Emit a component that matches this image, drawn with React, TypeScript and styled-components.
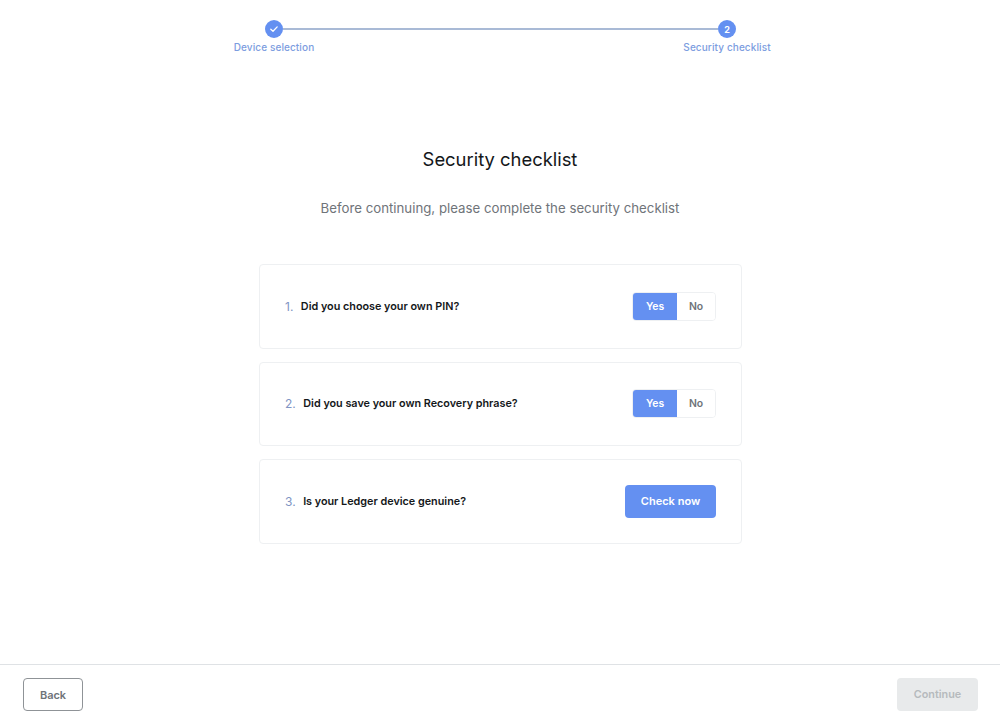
import React from 'react'
import styled, { createGlobalStyle } from 'styled-components'

const Global = createGlobalStyle`
  html, body { margin: 0; padding: 0; background: #fff; }
  body { font-family: Inter, "Noto Sans", sans-serif; color: #14171a; }
  * { box-sizing: border-box; }
`

const questions = [
  { id: 1, text: 'Did you choose your own PIN?', action: 'toggle' },
  { id: 2, text: 'Did you save your own Recovery phrase?', action: 'toggle' },
  { id: 3, text: 'Is your Ledger device genuine?', action: 'check' },
]

const App = () => {
  return (
    <Page>
      <Global />
      <Stepper>
        <Step>
          <Dot>
            <svg width="10" height="10" viewBox="0 0 10 10" fill="none">
              <path d="M1.8 5.2 4 7.3 8.2 2.9" stroke="#fff" strokeWidth="1.3" strokeLinecap="round" strokeLinejoin="round" />
            </svg>
          </Dot>
          <StepLabel>Device selection</StepLabel>
        </Step>
        <Connector />
        <Step>
          <Dot>2</Dot>
          <StepLabel>Security checklist</StepLabel>
        </Step>
      </Stepper>
      <Main>
        <Title>Security checklist</Title>
        <Subtitle>Before continuing, please complete the security checklist</Subtitle>
        <List>
          {questions.map((q) => (
            <Card key={q.id}>
              <Question>
                <Num>{q.id}.</Num>
                <QuestionText>{q.text}</QuestionText>
              </Question>
              {q.action === 'toggle' ? (
                <Toggle>
                  <YesButton>Yes</YesButton>
                  <NoButton>No</NoButton>
                </Toggle>
              ) : (
                <CheckButton>Check now</CheckButton>
              )}
            </Card>
          ))}
        </List>
      </Main>
      <Footer>
        <BackButton>Back</BackButton>
        <ContinueButton disabled>Continue</ContinueButton>
      </Footer>
    </Page>
  )
}

export default App

const Page = styled.div`
  width: 1000px;
  height: 721px;
  display: flex;
  flex-direction: column;
  overflow: hidden;
  background: #fff;
`

const Stepper = styled.div`
  display: grid;
  grid-template-columns: 80px 1fr 88px;
  width: 537px;
  margin: 20px 0 0 234px;
`

const Step = styled.div`
  display: flex;
  flex-direction: column;
  align-items: center;
`

const Dot = styled.div`
  width: 18px;
  height: 18px;
  border-radius: 50%;
  background: #6490f1;
  color: #fff;
  font-size: 9px;
  font-weight: 700;
  display: flex;
  align-items: center;
  justify-content: center;
`

const StepLabel = styled.div`
  margin-top: 3px;
  font-size: 10px;
  line-height: 13px;
  font-weight: 500;
  letter-spacing: 0.01em;
  color: #7c9de0;
  white-space: nowrap;
`

const Connector = styled.div`
  height: 2px;
  margin: 8px -35px 0 -31px;
  background: #a9bad6;
`

const Main = styled.main`
  flex: 1;
  display: flex;
  flex-direction: column;
  align-items: center;
`

const Title = styled.h1`
  margin: 93px 0 0;
  font-size: 18.4px;
  line-height: 24px;
  font-weight: 400;
  color: #14171a;
`

const Subtitle = styled.p`
  margin: 27px 0 0;
  font-size: 13.26px;
  line-height: 20px;
  color: #6f7479;
`

const List = styled.div`
  width: 483px;
  margin: 46px 0 0 1px;
  display: flex;
  flex-direction: column;
  gap: 13px;
`

const Card = styled.div`
  height: 84.5px;
  padding: 0 25px;
  border: 1px solid #eef0f2;
  border-radius: 4px;
  display: flex;
  align-items: center;
  justify-content: space-between;
`

const Question = styled.div`
  display: flex;
  align-items: center;
  gap: 7.5px;
`

const Num = styled.span`
  font-size: 12px;
  color: #7f95c4;
`

const QuestionText = styled.span`
  font-size: 10.8px;
  font-weight: 600;
  color: #14171a;
`

const Toggle = styled.div`
  display: flex;
  height: 29px;
  border-radius: 4px;
  overflow: hidden;
  border: 1px solid #eef0f2;
`

const ToggleBase = styled.button`
  width: 44px;
  border: none;
  padding: 0;
  font-family: inherit;
  font-size: 10.4px;
  font-weight: 600;
`

const YesButton = styled(ToggleBase)`
  background: #6490f1;
  color: #fff;
`

const NoButton = styled(ToggleBase)`
  width: 38px;
  background: #fff;
  color: #6f7479;
`

const CheckButton = styled.button`
  width: 91px;
  height: 33px;
  border: none;
  border-radius: 4px;
  background: #6490f1;
  color: #fff;
  font-family: inherit;
  font-size: 11px;
  font-weight: 600;
`

const Footer = styled.footer`
  height: 57px;
  padding: 13px 22px 0 23px;
  border-top: 1px solid #dfe2e5;
  display: flex;
  align-items: flex-start;
  justify-content: space-between;
`

const BackButton = styled.button`
  width: 60px;
  height: 33px;
  background: #fff;
  border: 1px solid #8f9397;
  border-radius: 4px;
  color: #6f7479;
  font-family: inherit;
  font-size: 11px;
  font-weight: 600;
`

const ContinueButton = styled.button`
  width: 81px;
  height: 33px;
  background: #e8eaeb;
  border: none;
  border-radius: 4px;
  color: #b6babd;
  font-family: inherit;
  font-size: 10.8px;
  font-weight: 600;
`
